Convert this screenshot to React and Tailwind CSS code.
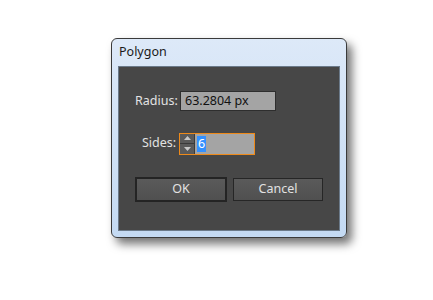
import React from 'react';

const Spinner = () => (
  <div className="flex flex-col w-[15px] h-full border-r border-[#3a3a3a] bg-[#5a5a5a]">
    <div className="flex-1 flex items-center justify-center border-b border-[#3a3a3a]">
      <svg width="7" height="4" viewBox="0 0 7 4"><path d="M0 4 L3.5 0 L7 4 Z" fill="#c8c8c8" /></svg>
    </div>
    <div className="flex-1 flex items-center justify-center">
      <svg width="7" height="4" viewBox="0 0 7 4"><path d="M0 0 L3.5 4 L7 0 Z" fill="#c8c8c8" /></svg>
    </div>
  </div>
);

const App = () => {
  return (
    <div className="w-[433px] h-[300px] bg-white relative" style={{ fontFamily: '"Noto Sans", "DejaVu Sans", sans-serif' }}>
      <div className="absolute left-[111px] top-[38px] w-[236px] h-[200px] rounded-[6px] border border-[#3a3a3a] bg-gradient-to-b from-[#dde9f8] to-[#c4daf3] shadow-[5px_6px_10px_rgba(0,0,0,0.55)] flex flex-col px-[6px] pb-[6px]">
        <div className="h-[27px] flex items-center pl-[1px] text-[12.5px] text-[#1a1a1a]">Polygon</div>
        <div className="flex-1 bg-[#474747] border border-[#6b7a8a] flex flex-col pl-[16px] pt-[24px]">
          <div className="flex items-center h-[20px]">
            <span className="text-[12.5px] text-[#e2e2e2] w-[45px]">Radius:</span>
            <div className="w-[96px] h-[20px] bg-[#a4a4a4] border border-[#2e2e2e] text-[12.5px] text-[#111] flex items-center pl-[4px]">63.2804 px</div>
          </div>
          <div className="flex items-center h-[21px] mt-[22px]">
            <span className="text-[12.5px] text-[#e2e2e2] w-[44px] pl-[7px]">Sides:</span>
            <div className="w-[76px] h-[22px] border border-[#ee8a1a] flex items-stretch bg-[#a4a4a4]">
              <Spinner />
              <div className="flex items-center pl-[2px]">
                <span className="bg-[#3390ff] text-white text-[12.5px] leading-[16px] px-[1px]">6</span>
              </div>
            </div>
          </div>
          <div className="flex mt-[23px] gap-[6px]">
            <button className="w-[92px] h-[25px] border-2 border-[#242424] bg-gradient-to-b from-[#5a5a5a] to-[#505050] text-[12.5px] text-[#e2e2e2] flex items-center justify-center">OK</button>
            <button className="w-[90px] h-[23px] mt-[1px] border border-[#262626] bg-gradient-to-b from-[#5a5a5a] to-[#505050] text-[12.5px] text-[#e2e2e2] flex items-center justify-center">Cancel</button>
          </div>
        </div>
      </div>
    </div>
  );
};

export default App;
